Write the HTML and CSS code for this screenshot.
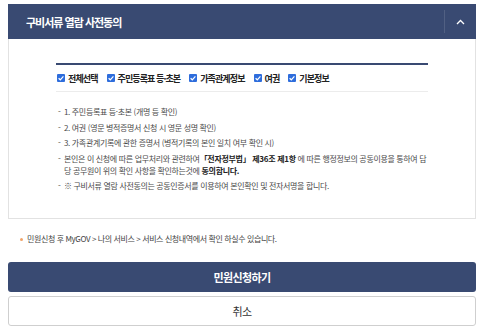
FILE: index.html
```html
<!DOCTYPE html>
<html lang="ko">

<head>
  <meta charset="UTF-8">
  <title>구비서류 열람 사전동의</title>
  <link rel="stylesheet" href="styles.css">
</head>

<body>
  <div class="panel">
    <div class="panel-head">
      <h2 class="panel-title">구비서류 열람 사전동의</h2>
      <button class="toggle" type="button" aria-label="접기">
        <svg width="9" height="6" viewBox="0 0 9 6">
          <path d="M1 5 L4.5 1.5 L8 5" fill="none" stroke="#fff" stroke-width="1.3" />
        </svg>
      </button>
    </div>

    <div class="panel-body">
      <div class="agree">
        <label class="check"><span class="box"></span>전체선택</label>
        <label class="check"><span class="box"></span>주민등록표 등·초본</label>
        <label class="check"><span class="box"></span>가족관계정보</label>
        <label class="check"><span class="box"></span>여권</label>
        <label class="check"><span class="box"></span>기본정보</label>
      </div>

      <ul class="notes">
        <li>1. 주민등록표 등·초본 (개명 등 확인)</li>
        <li>2. 여권 (영문 병적증명서 신청 시 영문 성명 확인)</li>
        <li>3. 가족관계기록에 관한 증명서 (병적기록의 본인 일치 여부 확인 시)</li>
        <li>본인은 이 신청에 따른 업무처리와 관련하여<b class="law">「전자정부법」 제36조 제1항</b> 에 따른 행정정보의 공동이용을 통하여 담당 공무원이 위의 확인 사항을 확인하는것에 <b class="law">동의합니다.</b></li>
        <li>※ 구비서류 열람 사전동의는 공동인증서를 이용하여 본인확인 및 전자서명을 합니다.</li>
      </ul>
    </div>
  </div>

  <p class="notice">민원신청 후 MyGOV &gt; 나의 서비스 &gt; 서비스 신청내역에서 확인 하실수 있습니다.</p>

  <div class="actions">
    <button class="btn btn-primary" type="button">민원신청하기</button>
    <button class="btn btn-cancel" type="button">취소</button>
  </div>
</body>

</html>
```

FILE: styles.css
```css
  body {
    margin: 0;
    padding: 4px 8px 0;
    font-family: "Noto Sans CJK KR", "Noto Sans", sans-serif;
    color: #333;
    background: #fff;
  }

  .panel-head {
    display: flex;
    align-items: center;
    height: 35px;
    padding-left: 18px;
    background: #394a72;
  }

  .panel-title {
    flex: 1;
    margin: 0;
    font-size: 11px;
    font-weight: bold;
    letter-spacing: -1px;
    color: #fff;
  }

  .toggle {
    display: flex;
    align-items: center;
    justify-content: center;
    width: 32px;
    height: 23px;
    padding: 0;
    border: 0;
    border-left: 1px solid rgba(255, 255, 255, 0.12);
    background: none;
  }

  .panel-body {
    height: 180px;
    box-sizing: border-box;
    padding: 24px 47px 0;
    border: 1px solid #e2e2e2;
    border-top: 0;
  }

  .agree {
    display: flex;
    align-items: center;
    gap: 9px;
    height: 26px;
    padding-left: 1px;
    border-top: 2px solid #394a72;
    border-bottom: 1px solid #ececec;
  }

  .check {
    display: flex;
    align-items: center;
    gap: 3px;
    font-size: 9px;
    font-weight: bold;
    letter-spacing: -0.9px;
    color: #222;
  }

  .box {
    width: 8px;
    height: 8px;
    border-radius: 1px;
    background: #2e6ddc url("data:image/svg+xml,%3Csvg xmlns='http://www.w3.org/2000/svg' viewBox='0 0 8 8'%3E%3Cpath d='M1.6 4.2 L3.3 5.8 L6.4 2.4' fill='none' stroke='white' stroke-width='1.2'/%3E%3C/svg%3E") center / 8px 8px no-repeat;
  }

  .notes {
    margin: 0;
    padding: 14px 0 0 2px;
    list-style: none;
  }

  .notes li {
    position: relative;
    padding-left: 6px;
    margin-bottom: 3.5px;
    font-size: 8px;
    line-height: 12px;
    letter-spacing: -0.35px;
    color: #4a4a4a;
  }

  .notes li::before {
    content: "-";
    position: absolute;
    left: 0;
  }

  .law {
    color: #222;
    letter-spacing: -0.3px;
  }

  .notice {
    margin: 14px 0 0;
    padding-left: 19px;
    position: relative;
    font-size: 8px;
    line-height: 12px;
    letter-spacing: -0.4px;
    color: #444;
  }

  .notice::before {
    content: "";
    position: absolute;
    left: 12px;
    top: 5px;
    width: 3px;
    height: 3px;
    border-radius: 50%;
    background: #f0a46a;
  }

  .actions {
    display: flex;
    flex-direction: column;
    gap: 4px;
    margin-top: 17px;
  }

  .btn {
    height: 30px;
    border-radius: 3px;
    font-family: inherit;
    font-size: 11px;
    letter-spacing: -0.6px;
  }

  .btn-primary {
    border: 0;
    background: #394a72;
    color: #fff;
    font-weight: bold;
  }

  .btn-cancel {
    border: 1px solid #cfcfcf;
    background: #fff;
    color: #333;
  }
```
